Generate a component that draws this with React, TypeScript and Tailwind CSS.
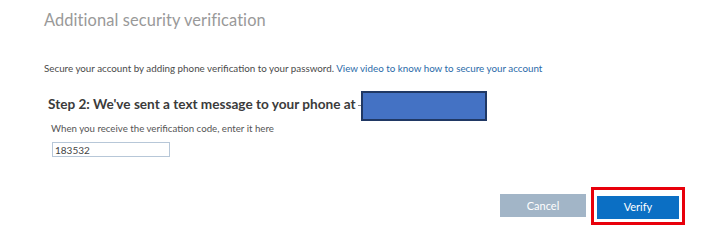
import React from 'react';

const font = { fontFamily: 'Lato, "Segoe UI", sans-serif' };

export default function App() {
    return (
        <div className="w-[708px] h-[244px] bg-white pl-[44px] flex flex-col" style={font}>
            {/* Page title */}
            <h1 className="mt-[7px] text-[16.4px] leading-[26px] text-[#999999] tracking-[0.1px]">
                Additional security verification
            </h1>

            <p className="mt-[28px] text-[9.8px] leading-[14px] text-[#4a4a4a]">
                Secure your account by adding phone verification to your password.{' '}
                <span className="text-[#2a6aa8]">View video to know how to secure your account</span>
            </p>

            {/* Step 2 */}
            <div className="ml-[4px] mt-[16px] flex items-center">
                <span className="text-[13.6px] font-bold text-[#3b3b3b] leading-[18px] mb-[4px]">
                    Step 2: We've sent a text message to your phone at
                </span>
                <span className="ml-[2px] mb-[2px] w-[3px] h-[1px] bg-[#888]" />
                <div className="w-[126px] h-[30px] bg-[#4472c4] border-2 border-[#203864]" />
            </div>

            <p className="ml-[7px] mt-[1px] text-[9.7px] leading-[13px] text-[#555]">
                When you receive the verification code, enter it here
            </p>

            <input
                readOnly
                value="183532"
                className="ml-[8px] mt-[7px] w-[118px] h-[15px] border border-[#b7c7d8] px-[2px] text-[10px] leading-[13px] text-[#444] outline-none"
            />

            {/* Actions */}
            <div className="mt-[30px] flex items-center justify-end pr-[23px]">
                <button className="w-[86px] h-[23px] bg-[#a2b5c7] text-white text-[11px]">Cancel</button>
                <div className="ml-[5px] p-[1px] border-[3px] border-[#e8000b]">
                    <div className="p-[2px] bg-white">
                        <button className="w-[82px] h-[23px] bg-[#0b6fc4] text-white text-[11px]">Verify</button>
                    </div>
                </div>
            </div>
        </div>
    );
}
